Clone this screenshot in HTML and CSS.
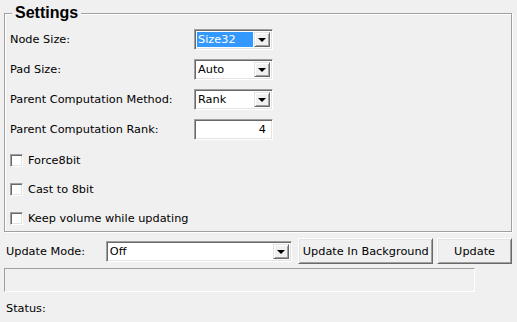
FILE: index.html
```
<!DOCTYPE html>
<html lang="en">
<head>
  <meta charset="UTF-8" />
  <title>Settings</title>
  <link rel="stylesheet" href="styles.css">
</head>
<body>
  <div class="settings">
    <div class="settings-title">Settings</div>

    <div class="field">
      <span class="label">Node Size:</span>
      <div class="combo"><span class="combo-value selected">Size32</span><span class="drop"><span class="arrow"></span></span></div>
    </div>

    <div class="field">
      <span class="label">Pad Size:</span>
      <div class="combo"><span class="combo-value">Auto</span><span class="drop"><span class="arrow"></span></span></div>
    </div>

    <div class="field">
      <span class="label">Parent Computation Method:</span>
      <div class="combo"><span class="combo-value">Rank</span><span class="drop"><span class="arrow"></span></span></div>
    </div>

    <div class="field">
      <span class="label">Parent Computation Rank:</span>
      <div class="number">4</div>
    </div>

    <div class="checks">
      <div class="check"><span class="box"></span>Force8bit</div>
      <div class="check"><span class="box"></span>Cast to 8bit</div>
      <div class="check"><span class="box"></span>Keep volume while updating</div>
    </div>
  </div>

  <div class="update-row">
    <span class="update-label">Update Mode:</span>
    <div class="combo combo-wide"><span class="combo-value">Off</span><span class="drop"><span class="arrow"></span></span></div>
    <button class="btn btn-bg">Update In Background</button>
    <button class="btn btn-update">Update</button>
  </div>

  <div class="progress"></div>

  <div class="status">Status:</div>
</body>
</html>
```

FILE: styles.css
```
* {
  margin: 0;
  padding: 0;
  box-sizing: border-box;
}

body {
  background-color: #f0f0f0;
  font-family: 'DejaVu Sans', Verdana, sans-serif;
  font-size: 11.3px;
  color: #000;
  padding: 13px 5px 0 4px;
}

.settings {
  position: relative;
  width: 508px;
  height: 219px;
  border: 1px solid #a0a0a0;
  box-shadow: 1px 1px 0 #fff, inset 1px 1px 0 #fff;
  padding: 15px 0 0 5px;
}

.settings-title {
  position: absolute;
  left: 7px;
  top: -10px;
  padding: 0 3px;
  background-color: #f0f0f0;
  font-family: 'Liberation Sans', Arial, sans-serif;
  font-weight: bold;
  font-size: 16px;
  line-height: 18px;
}

.field {
  display: flex;
  align-items: center;
  height: 21px;
  margin-bottom: 9px;
}

.label {
  width: 184px;
}

.combo {
  display: flex;
  align-items: stretch;
  width: 79px;
  height: 21px;
  background-color: white;
  border: 1px solid;
  border-color: #a0a0a0 #fff #fff #a0a0a0;
  box-shadow: inset 1px 1px 0 #696969, inset -1px -1px 0 #e3e3e3;
  padding: 2px;
}

.combo-value {
  flex: 1;
  display: flex;
  align-items: center;
  padding-left: 1px;
  margin-right: 1px;
}

.combo-value.selected {
  background-color: #3399ff;
  color: white;
}

.drop {
  width: 16px;
  display: flex;
  align-items: center;
  justify-content: center;
  background-color: #f0f0f0;
  border: 1px solid;
  border-color: #e3e3e3 #696969 #696969 #e3e3e3;
  box-shadow: inset 1px 1px 0 #fff, inset -1px -1px 0 #a0a0a0;
}

.arrow {
  width: 0;
  height: 0;
  border-left: 4px solid transparent;
  border-right: 4px solid transparent;
  border-top: 4px solid #000;
  margin-top: 1px;
}

.number {
  width: 79px;
  height: 21px;
  background-color: white;
  border: 1px solid;
  border-color: #a0a0a0 #fff #fff #a0a0a0;
  box-shadow: inset 1px 1px 0 #696969, inset -1px -1px 0 #e3e3e3;
  text-align: right;
  padding: 2px 6px 0 0;
  line-height: 15px;
}

.checks {
  display: flex;
  flex-direction: column;
  gap: 16px;
  margin-top: 14px;
}

.check {
  display: flex;
  align-items: center;
  height: 13px;
}

.box {
  width: 13px;
  height: 13px;
  margin-right: 5px;
  background-color: white;
  border: 1px solid;
  border-color: #a0a0a0 #fff #fff #a0a0a0;
  box-shadow: inset 1px 1px 0 #696969, inset -1px -1px 0 #e3e3e3;
}

.update-row {
  display: flex;
  align-items: center;
  height: 26px;
  margin-top: 6px;
}

.update-label {
  width: 102px;
  padding-left: 2px;
}

.combo-wide {
  width: 187px;
  margin-right: 6px;
}

.btn {
  height: 26px;
  font-family: inherit;
  font-size: inherit;
  color: #000;
  background-color: #f0f0f0;
  border: 1px solid;
  border-color: #fff #696969 #696969 #fff;
  box-shadow: inset 1px 1px 0 #e3e3e3, inset -1px -1px 0 #a0a0a0;
}

.btn-bg {
  width: 135px;
  margin-right: 4px;
}

.btn-update {
  width: 75px;
}

.progress {
  width: 471px;
  height: 24px;
  margin-top: 4px;
  border: 1px solid;
  border-color: #a0a0a0 #fff #fff #a0a0a0;
}

.status {
  margin-top: 10px;
  padding-left: 2px;
  line-height: 13px;
}
```
